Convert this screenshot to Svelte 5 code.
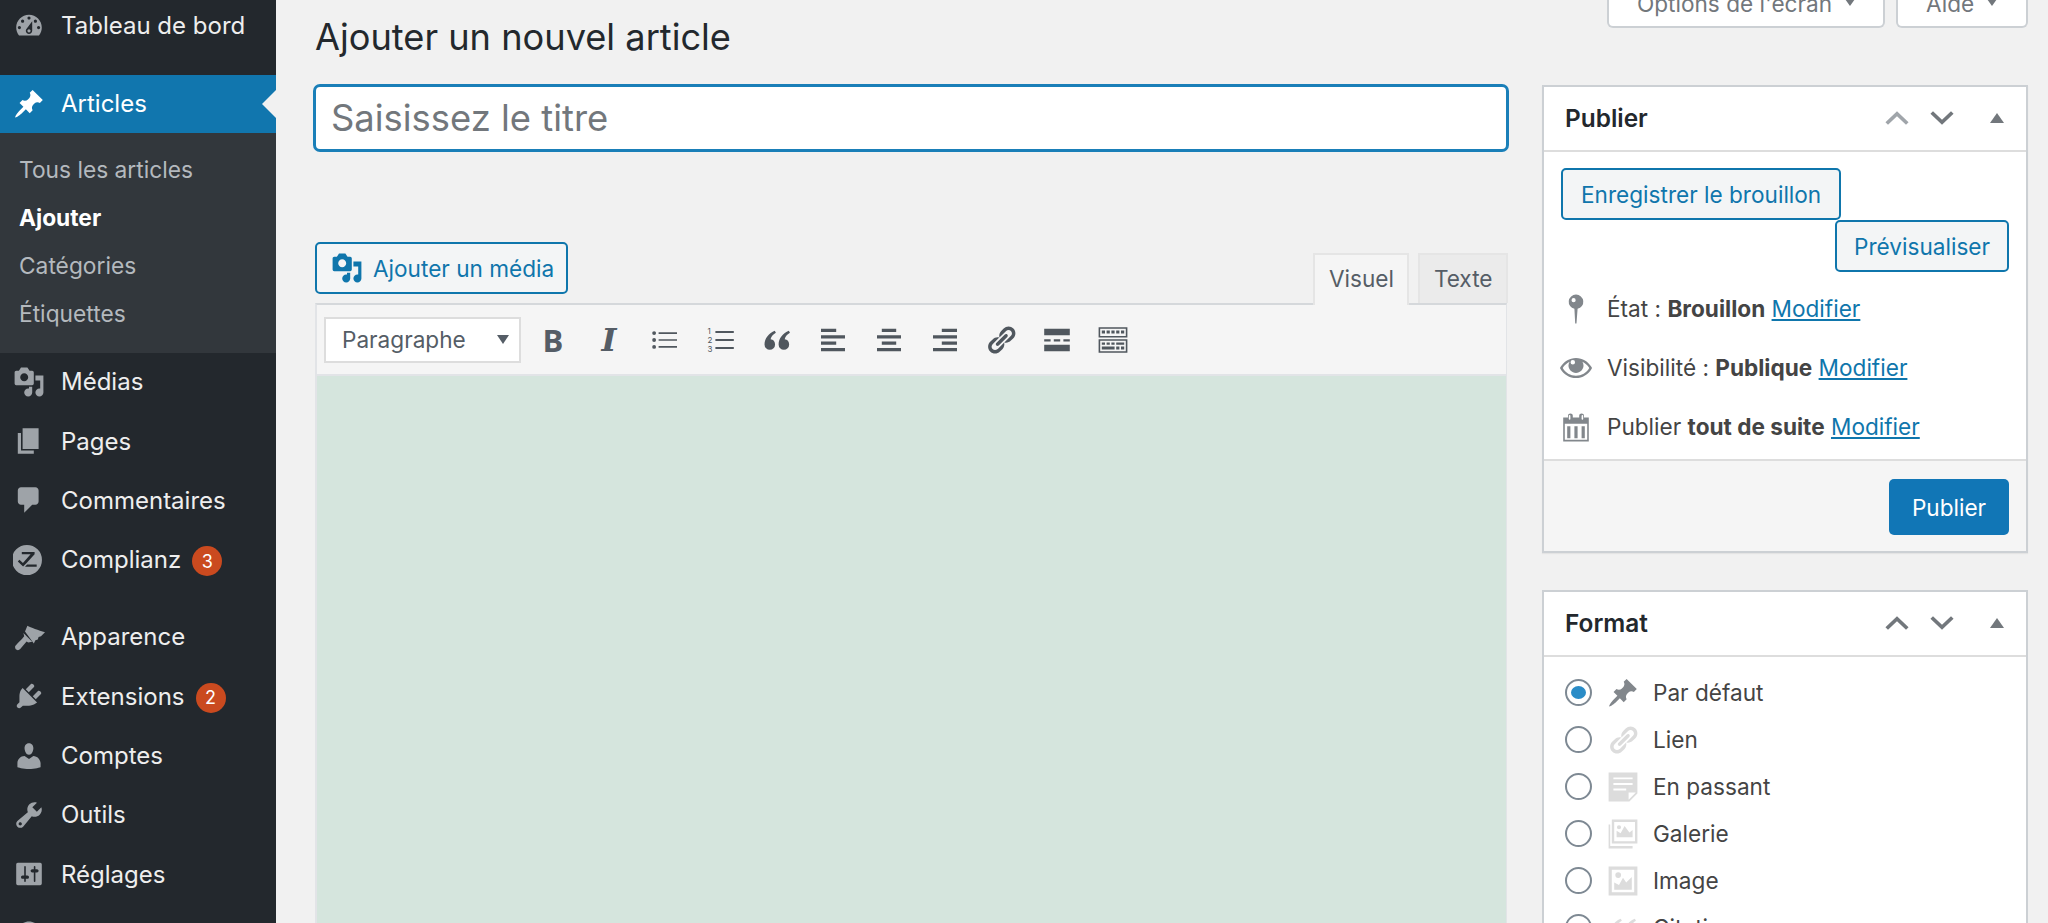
<script>
	const icons = {
		dashboard:
			'M3.76 16h12.48c1.1-1.37 1.76-3.11 1.76-5 0-4.42-3.58-8-8-8s-8 3.58-8 8c0 1.89.66 3.63 1.76 5zM10 4c.55 0 1 .45 1 1s-.45 1-1 1-1-.45-1-1 .45-1 1-1zM6 6c.55 0 1 .45 1 1s-.45 1-1 1-1-.45-1-1 .45-1 1-1zm8 0c.55 0 1 .45 1 1s-.45 1-1 1-1-.45-1-1 .45-1 1-1zm-5.37 5.55L12 7v6c0 1.1-.9 2-2 2s-2-.9-2-2c0-.57.24-1.08.63-1.45zM4 10c.55 0 1 .45 1 1s-.45 1-1 1-1-.45-1-1 .45-1 1-1zm12 0c.55 0 1 .45 1 1s-.45 1-1 1-1-.45-1-1 .45-1 1-1zm-5 3c0-.55-.45-1-1-1s-1 .45-1 1 .45 1 1 1 1-.45 1-1z',
		pin: 'M10.44 3.02l1.82-1.82 6.36 6.35-1.83 1.82c-1.05-.68-2.48-.57-3.41.36l-.75.75c-.92.93-1.04 2.35-.35 3.41l-1.83 1.82-2.41-2.41-2.8 2.79c-.42.42-3.38 2.71-3.8 2.29s1.86-3.39 2.28-3.81l2.79-2.79L4.1 9.36l1.83-1.82c1.05.69 2.48.57 3.4-.36l.75-.75c.93-.92 1.05-2.35.36-3.41z',
		media:
			'M13 11V4c0-.55-.45-1-1-1h-1.67L9 1H5L3.67 3H2c-.55 0-1 .45-1 1v7c0 .55.45 1 1 1h10c.55 0 1-.45 1-1zM7 4.5c1.38 0 2.5 1.12 2.5 2.5S8.38 9.5 7 9.5 4.5 8.38 4.5 7 5.62 4.5 7 4.5zM14 6h5v10.5c0 1.38-1.12 2.5-2.5 2.5S14 17.88 14 16.5s1.12-2.5 2.5-2.5c.17 0 .34.02.5.05V9h-3V6zm-4 8.05V13h2v3.5c0 1.38-1.12 2.5-2.5 2.5S7 17.88 7 16.5 8.12 14 9.5 14c.17 0 .34.02.5.05z',
		page: 'M6 15V2h10v13H6zm-1 1h8v2H3V5h2v11z',
		comments:
			'M5 2h9c1.1 0 2 .9 2 2v7c0 1.1-.9 2-2 2h-2l-5 5v-5H5c-1.1 0-2-.9-2-2V4c0-1.1.9-2 2-2z',
		complianz:
			'M8.700.600a9.400 9.400 0 1 0 0 18.800 9.400 9.400 0 0 0 0-18.800zM5.500 5h8v1.400L8.500 11.800 6.300 14l-3.300-3 1-1.100 2.200 2L11 6.400H5.500zM8.800 12.800h6v1.400H7.500z',
		brush:
			'M9 3C11 4 16 6 20 7L17.500 9.500 16 10 15.500 11.500 14 12 13 14 7.500 6.500zM6.500 7.500 12 13 9.500 13.500 8.500 12.800 4.500 17.500C3.500 18.800 1 18.300 1.300 16 1.500 15 6 11 7 9.500z',
		plugin:
			'M13.11 4.36L9.87 7.6 8 5.73l3.24-3.24c.35-.34 1.05-.2 1.56.32.52.51.66 1.21.31 1.55zm-8 1.77l.91-1.12 9.01 9.01-1.19.84c-.71.71-2.63 1.16-3.82 1.16H6.14L4.9 17.26c-.59.59-1.54.59-2.12 0-.59-.58-.59-1.53 0-2.12l1.24-1.24v-3.88c0-1.13.4-3.05 1.09-3.89zm7.26 3.97l3.24-3.24c.34-.35 1.04-.21 1.55.31.52.51.66 1.21.31 1.55l-3.24 3.25z',
		users:
			'M10 9.25c-2.27 0-2.73-3.44-2.73-3.44C7 4.02 7.82 2 9.97 2c2.16 0 2.98 2.02 2.71 3.81 0 0-.41 3.44-2.68 3.44zm0 2.57L12.72 10c2.39 0 4.52 2.33 4.52 4.53v2.49s-3.65 1.13-7.24 1.13c-3.65 0-7.24-1.13-7.24-1.13v-2.49c0-2.25 1.94-4.48 4.47-4.48z',
		tools:
			'M16.68 9.77c-1.34 1.34-3.3 1.67-4.95.99l-5.41 6.52c-.99.99-2.59.99-3.58 0s-.99-2.59 0-3.57l6.52-5.42c-.68-1.65-.35-3.61.99-4.95 1.28-1.28 3.12-1.62 4.72-1.06l-2.89 2.89 2.82 2.82 2.86-2.87c.53 1.58.18 3.41-1.08 4.65zM3.81 16.21c.4.39 1.04.39 1.43 0 .4-.4.4-1.04 0-1.43-.39-.4-1.03-.4-1.43 0-.39.39-.39 1.03 0 1.43z',
		settings:
			'M18 16V4c0-.55-.45-1-1-1H3c-.55 0-1 .45-1 1v12c0 .55.45 1 1 1h14c.55 0 1-.45 1-1zM8 11h1c.55 0 1 .45 1 1s-.45 1-1 1H8v1.5c0 .28-.22.5-.5.5s-.5-.22-.5-.5V13H6c-.55 0-1-.45-1-1s.45-1 1-1h1V5.5c0-.28.22-.5.5-.5s.5.22.5.5V11zm5-2h-1c-.55 0-1-.45-1-1s.45-1 1-1h1V5.500c0-.28.22-.5.5-.5s.5.22.5.5V7h1c.55 0 1 .45 1 1s-.45 1-1 1h-1v5.500c0 .28-.22.5-.5.5s-.5-.22-.5-.5V9z',
		collapse:
			'M10 2.16c4.33 0 7.84 3.51 7.84 7.84s-3.51 7.84-7.84 7.84S2.16 14.33 2.16 10 5.67 2.16 10 2.16zM11 14V6l-4 4z',
		link: 'M17.74 2.76c1.68 1.69 1.68 4.41 0 6.1l-1.53 1.52c-1.12 1.12-2.7 1.49-4.13 1.13l2.62-2.62.76-.77.76-.76c.84-.84.84-2.2 0-3.04-.84-.85-2.2-.85-3.04 0l-.77.76-3.38 3.38c-.37-1.43 0-3.01 1.12-4.13l1.52-1.53c1.69-1.68 4.42-1.68 6.1 0zM8.59 13.43l5.34-5.34c.42-.42.42-1.1 0-1.52-.44-.43-1.13-.39-1.53 0l-5.33 5.34c-.42.42-.42 1.1 0 1.52.43.43 1.09.39 1.52 0zm-.76 2.29l4.14-4.14c.38 1.43 0 3.02-1.12 4.14l-1.52 1.52c-1.68 1.68-4.41 1.68-6.1 0-1.68-1.68-1.68-4.42 0-6.1l1.53-1.52c1.12-1.13 2.71-1.5 4.14-1.13l-3.38 3.38-.76.76c-.84.84-.84 2.2 0 3.04.84.84 2.2.84 3.04 0z',
		quote:
			'M8.800 12.800a3.300 3.300 0 1 1-6.600 0C2.200 9 5 5.500 8.600 4.200L9.300 5.500C7.300 6.700 6.300 8 6 9.600 7.700 9.700 8.800 11.100 8.800 12.800zM17.600 12.800a3.300 3.300 0 1 1-6.600 0C11 9 13.800 5.500 17.400 4.200L18.100 5.500C16.100 6.700 15.100 8 14.800 9.600 16.500 9.700 17.600 11.100 17.600 12.800z',
		listUl:
			'M6 5.200h11.500v1H6zM6 9.500h11.500v1H6zM6 13.800h11.500v1H6zM4.400 5.700a1.200 1.200 0 1 1-2.400 0 1.200 1.200 0 0 1 2.400 0zM4.400 10a1.200 1.200 0 1 1-2.400 0 1.200 1.200 0 0 1 2.400 0zM4.400 14.300a1.200 1.200 0 1 1-2.400 0 1.200 1.200 0 0 1 2.400 0z',
		listOl: 'M6.500 4.400h11.500v1.200H6.500zM6.500 9.400h11.500v1.200H6.500zM6.500 14.400h11.500v1.200H6.500z',
		alignLeft: 'M2.500 3h9.500v2H2.500zM2.500 7h15v2h-15zM2.500 11h9.500v2H2.500zM2.500 15h15v2h-15z',
		alignCenter: 'M5.500 3h9v2h-9zM2.500 7h15v2h-15zM5.500 11h9v2h-9zM2.500 15h15v2h-15z',
		alignRight: 'M8 3h9.500v2H8zM2.500 7h15v2h-15zM8 11h9.500v2H8zM2.500 15h15v2h-15z',
		more: 'M2 3h16v4H2zM2 9.500h4v1.500H2zM8 9.500h4v1.500H8zM14 9.500h4v1.500h-4zM2 13h16v4H2z',
		kitchen:
			'M1 2h18v6.500H1zM2 3v4.500h16V3zM3 4h2v2H3zM6 4h2v2H6zM9 4h2v2H9zM12 4h2v2h-2zM15 4h2v2h-2zM1 9.500h18V18H1zM2 10.500V17h16v-6.500zM3 11.500h2v1.500H3zM6 11.500h2v1.500H6zM9 11.500h2v1.500H9zM12 11.500h5v1.500h-5zM3 14h8v2H3zM12 14h2v2h-2zM15 14h2v2h-2z',
		location:
			'M10 1a4.500 4.500 0 0 1 1 8.900L10.300 19H9.500L9 9.900A4.500 4.500 0 0 1 10 1zM8.500 3.200a1.300 1.300 0 1 0 0 2.600 1.300 1.300 0 0 0 0-2.600z',
		eye: 'M19.700 9.400C17.700 6 14.100 3.700 10 3.700S2.300 6 .3 9.400L0 10l.3.6c2 3.400 5.600 5.700 9.700 5.700s7.700-2.300 9.700-5.700l.3-.6-.3-.6zM10 14.800c-3.500 0-6.600-1.800-8.300-4.800 1-1.700 2.500-3 4.300-3.900-.4.700-.7 1.500-.7 2.400 0 2.500 2.100 4.600 4.700 4.600s4.700-2.100 4.700-4.600c0-.9-.3-1.700-.7-2.400 1.800.9 3.300 2.200 4.300 3.900-1.700 3-4.800 4.800-8.300 4.800zM8 5a1.400 1.400 0 1 1 0 2.800A1.400 1.400 0 0 1 8 5z',
		calendar:
			'M15 4h3v15H2V4h3V3c0-.41.15-.76.44-1.06.29-.29.65-.44 1.060-.44s.77.15 1.060.44c.29.3.44.65.44 1.060v1h4V3c0-.41.15-.76.44-1.060.29-.29.65-.44 1.060-.44s.77.15 1.060.44c.29.3.44.65.44 1.060v1zM6 5.500c.28 0 .5-.22.5-.5V3c0-.28-.22-.5-.5-.5s-.5.22-.5.5v2c0 .28.22.5.5.5zm8 0c.28 0 .5-.22.5-.5V3c0-.28-.22-.5-.5-.5s-.5.22-.5.5v2c0 .28.22.5.5.5zM17 18V8H3v10zM4.500 9.500h2V17h-2zM9 9.500h2V17H9zM13.500 9.500h2V17h-2z',
		aside:
			'M1 1h18v13l-5 5H1zM4 4v1.200h12V4zM4 7.500v1.200h12V7.500zM4 11v1.200h8V11zM13.500 18l4.500-4.500h-4.500z',
		gallery:
			'M3 1h16v15H3zM4.500 2.500v12h13v-12zM6 12V8l2.500 1.500L11 5l3 4 2-1.500V12zM7.500 4.500a1.300 1.300 0 1 0 0 2.600 1.300 1.300 0 0 0 0-2.600zM1 4h1v13.500h14v1.500H1z',
		image:
			'M1 1h18v18H1zM3 3v14h14V3zM4.500 15.500V11l3 1.500L10 8l2 3 3.500-3.500v8zM7 4.500a1.800 1.800 0 1 0 0 3.600 1.800 1.800 0 0 0 0-3.600z',
		up: 'M2.300 12.800 10 5.500 17.700 12.800 16 14.500 10 8.900 4 14.500z',
		down: 'M2.300 7.200 10 14.500 17.700 7.200 16 5.500 10 11.100 4 5.500z'
	};

	const menuTop = [{ label: 'Tableau de bord', icon: 'dashboard' }];
	const subMenu = ['Tous les articles', 'Ajouter', 'Catégories', 'Étiquettes'];
	const menuA = [
		{ label: 'Médias', icon: 'media' },
		{ label: 'Pages', icon: 'page' },
		{ label: 'Commentaires', icon: 'comments' },
		{ label: 'Complianz', icon: 'complianz', badge: 3 }
	];
	const menuB = [
		{ label: 'Apparence', icon: 'brush' },
		{ label: 'Extensions', icon: 'plugin', badge: 2 },
		{ label: 'Comptes', icon: 'users' },
		{ label: 'Outils', icon: 'tools' },
		{ label: 'Réglages', icon: 'settings' },
		{ label: 'Réduire le menu', icon: 'collapse' }
	];

	const toolbar = [
		'b', 'i', 'listUl', 'listOl', 'quote', 'alignLeft', 'alignCenter', 'alignRight', 'link', 'more', 'kitchen'
	];

	const formats = [
		{ label: 'Par défaut', icon: 'pin', checked: true },
		{ label: 'Lien', icon: 'link' },
		{ label: 'En passant', icon: 'aside' },
		{ label: 'Galerie', icon: 'gallery' },
		{ label: 'Image', icon: 'image' },
		{ label: 'Citation', icon: 'quote' }
	];
</script>

{#snippet icon(name, cls = '')}
	<svg class="icon {cls}" viewBox="0 0 20 20" aria-hidden="true"><path fill-rule="evenodd" d={icons[name]} /></svg>
{/snippet}

{#snippet menuItem(item)}
	<li class="item">
		{@render icon(item.icon, 'menu-icon')}
		<span>{item.label}</span>
		{#if item.badge}<span class="badge">{item.badge}</span>{/if}
	</li>
{/snippet}

{#snippet boxHead(title, dimmed = false)}
	<header class="box-head">
		<h2>{title}</h2>
		<span class="arrows">
			{@render icon('up', dimmed ? 'up-dim' : '')}
			{@render icon('down')}
			<i class="caret-up"></i>
		</span>
	</header>
{/snippet}

<div class="page">
	<nav class="sidebar">
		<ul class="menu top">
			{#each menuTop as item}{@render menuItem(item)}{/each}
		</ul>
		<div class="current">
			{@render icon('pin', 'menu-icon')}
			<span>Articles</span>
		</div>
		<ul class="sub">
			{#each subMenu as s, i}
				<li class:active={i === 1}>{s}</li>
			{/each}
		</ul>
		<ul class="menu">
			{#each menuA as item}{@render menuItem(item)}{/each}
		</ul>
		<ul class="menu second">
			{#each menuB as item}{@render menuItem(item)}{/each}
		</ul>
	</nav>

	<main class="content">
		<section class="left">
			<h1>Ajouter un nouvel article</h1>
			<input class="title" type="text" placeholder="Saisissez le titre" />
			<div class="editor-top">
				<button class="btn media-btn" type="button">
					{@render icon('media')}
					Ajouter un média
				</button>
				<div class="tabs">
					<span class="tab on">Visuel</span>
					<span class="tab">Texte</span>
				</div>
			</div>
			<div class="editor">
				<div class="toolbar">
					<div class="select">Paragraphe <i class="caret-down"></i></div>
					{#each toolbar as t}
						<span class="tool">
							{#if t === 'b'}
								<b class="tb">B</b>
							{:else if t === 'i'}
								<em class="ti">I</em>
							{:else if t === 'listOl'}
								<svg class="icon" viewBox="0 0 20 20" aria-hidden="true">
									<path d={icons.listOl} />
									<text class="nums" x="1.500" y="6.500">1</text>
									<text class="nums" x="1.500" y="12">2</text>
									<text class="nums" x="1.500" y="17.500">3</text>
								</svg>
							{:else}
								{@render icon(t)}
							{/if}
						</span>
					{/each}
				</div>
				<div class="edit-area"></div>
			</div>
		</section>

		<aside class="side">
			<div class="screen-meta">
				<button class="meta-btn options" type="button">Options de l'écran <i class="caret-down small"></i></button>
				<button class="meta-btn help" type="button">Aide <i class="caret-down small"></i></button>
			</div>

			<div class="box publish">
				{@render boxHead('Publier', true)}
				<div class="actions">
					<button class="btn" type="button">Enregistrer le brouillon</button>
					<button class="btn preview" type="button">Prévisualiser</button>
				</div>
				<ul class="misc">
					<li>{@render icon('location')}<span>État : <b>Brouillon</b> <a href="#etat">Modifier</a></span></li>
					<li>{@render icon('eye')}<span>Visibilité : <b>Publique</b> <a href="#vis">Modifier</a></span></li>
					<li>{@render icon('calendar')}<span>Publier <b>tout de suite</b> <a href="#date">Modifier</a></span></li>
				</ul>
				<div class="box-foot">
					<button class="primary" type="button">Publier</button>
				</div>
			</div>

			<div class="box format">
				{@render boxHead('Format')}
				<ul class="formats">
					{#each formats as f}
						<li>
							<span class="radio" class:checked={f.checked}></span>
							{@render icon(f.icon, f.checked ? 'fmt dark' : 'fmt')}
							<span>{f.label}</span>
						</li>
					{/each}
				</ul>
			</div>
		</aside>
	</main>
</div>

<style>
	:global(body) {
		margin: 0;
		background: #f1f1f1;
	}

	.page {
		display: flex;
		height: 923px;
		overflow: hidden;
		font-family: Inter, 'Noto Sans', sans-serif;
		font-size: 22.600px;
		color: #444;
	}

	ul {
		list-style: none;
		margin: 0;
		padding: 0;
	}

	.icon {
		width: 32px;
		height: 32px;
		fill: currentColor;
		flex: none;
		display: block;
	}

	/* sidebar */
	.sidebar {
		width: 276px;
		flex: none;
		background: #23282d;
		color: #eee;
		font-size: 24px;
	}

	.menu.top {
		margin-top: -4px;
		margin-bottom: 19.600px;
	}

	.item,
	.current {
		display: flex;
		align-items: center;
		height: 59.400px;
		padding-left: 13px;
		box-sizing: border-box;
	}

	.menu-icon {
		color: #9ea3a8;
		margin-right: 16px;
	}

	.current {
		position: relative;
		height: 58px;
		background: #1176ae;
		color: #fff;
	}

	.current .menu-icon {
		color: #fff;
	}

	.current::after {
		content: '';
		position: absolute;
		right: 0;
		top: 15px;
		border: 14px solid transparent;
		border-left: 0;
		border-right-color: #f1f1f1;
	}

	.sub {
		background: #32373c;
		height: 220px;
		padding-top: 13px;
		box-sizing: border-box;
		color: #b4b9be;
		font-size: 22.750px;
		margin-bottom: -1px;
	}

	.sub li {
		height: 48px;
		line-height: 48px;
		padding-left: 19px;
	}

	.sub .active {
		color: #fff;
		font-weight: 700;
	}

	.menu.second {
		margin-top: 17.500px;
	}

	.badge {
		width: 30px;
		height: 30px;
		border-radius: 50%;
		background: #ca4a1f;
		color: #fff;
		font-size: 18px;
		display: flex;
		align-items: center;
		justify-content: center;
		margin-left: 11px;
		margin-top: 3px;
	}

	/* main */
	.content {
		flex: 1;
		display: grid;
		grid-template-columns: 1196px 486px;
		column-gap: 33px;
		align-items: start;
		padding-left: 37px;
	}

	h1 {
		margin: 14px 0 0 2px;
		font-size: 36.200px;
		font-weight: 400;
		line-height: 46px;
		color: #23282d;
	}

	.title {
		display: block;
		width: 100%;
		height: 68px;
		margin-top: 24px;
		box-sizing: border-box;
		border: 3px solid #1a7fb8;
		border-radius: 7px;
		background: #fff;
		padding: 0 15px;
		font: inherit;
		font-size: 36.400px;
		outline: none;
	}

	.title::placeholder {
		color: #72777c;
		opacity: 1;
	}

	.editor-top {
		display: flex;
		justify-content: space-between;
		align-items: flex-end;
		height: 151px;
		padding-left: 2px;
		padding-right: 1px;
		box-sizing: border-box;
	}

	.btn {
		font: inherit;
		color: #0f76ac;
		background: #f3f5f6;
		border: 2px solid #0f76ac;
		border-radius: 5px;
		height: 52px;
		padding: 0 18px;
		white-space: nowrap;
		cursor: pointer;
		display: inline-flex;
		align-items: center;
	}

	.media-btn {
		gap: 10px;
		padding: 0 12px 0 14px;
		margin-bottom: 9px;
	}

	.tabs {
		display: flex;
		align-items: flex-start;
		gap: 9px;
		position: relative;
		z-index: 1;
	}

	.tab {
		height: 50px;
		line-height: 48px;
		padding: 0 13.500px;
		box-sizing: border-box;
		background: #ebebeb;
		color: #555d66;
		border: 2px solid #e5e5e5;
		border-bottom: 0;
	}

	.tab.on {
		background: #f5f5f5;
		height: 52px;
		margin-bottom: -2px;
	}

	.editor {
		margin-left: 2px;
		width: 1192px;
		box-sizing: border-box;
		border: 2px solid #e2e4e7;
		border-top-color: #d5d8db;
		border-bottom: 0;
		border-right-width: 1px;
	}

	.toolbar {
		display: flex;
		align-items: center;
		height: 71px;
		box-sizing: border-box;
		background: #f5f5f5;
		border-bottom: 2px solid #e2e4e7;
		padding: 0 0 0 7px;
	}

	.select {
		width: 197px;
		height: 46px;
		box-sizing: border-box;
		background: #fff;
		border: 2px solid #ddd;
		color: #555d66;
		display: flex;
		align-items: center;
		justify-content: space-between;
		padding: 0 10px 0 16px;
		margin-right: 4px;
	}

	.tool {
		width: 56px;
		display: flex;
		justify-content: center;
		align-items: center;
		color: #50575e;
	}

	.tb,
	.ti {
		display: block;
		line-height: 32px;
		color: #555d66;
	}

	.tb {
		font-size: 31px;
		font-family: 'Open Sans', sans-serif;
		font-weight: 700;
	}

	.ti {
		font-size: 32px;
		font-family: 'DejaVu Serif', serif;
		font-weight: 700;
		font-style: italic;
	}

	.nums {
		font-size: 5px;
		fill: #50575e;
		font-family: Inter, sans-serif;
	}

	.edit-area {
		height: 560px;
		background: #d5e5dd;
	}

	.caret-down {
		width: 0;
		height: 0;
		border: 6px solid transparent;
		border-top: 9px solid #555d66;
		border-bottom: 0;
		display: inline-block;
	}

	.caret-down.small {
		border-width: 5px;
		border-top-width: 7px;
		border-bottom: 0;
		border-top-color: #72777c;
		margin-left: 13px;
		margin-bottom: 10px;
	}

	/* right column */
	.screen-meta {
		display: flex;
		justify-content: flex-end;
		gap: 11px;
		height: 28px;
		align-items: flex-end;
		margin-bottom: 57px;
	}

	.meta-btn {
		font: inherit;
		color: #72777c;
		background: #fff;
		border: 2px solid #ccd0d4;
		border-top: 0;
		border-radius: 0 0 6px 6px;
		height: 52px;
		padding: 0 16px 10px 28px;
		flex: none;
		white-space: nowrap;
		display: flex;
		align-items: flex-end;
		line-height: 24px;
		box-sizing: border-box;
	}

	.meta-btn.options {
		width: 278px;
	}

	.meta-btn.help {
		width: 132px;
	}

	.box {
		background: #fff;
		border: 2px solid #ccd0d4;
		box-sizing: border-box;
	}

	.publish {
		height: 468px;
		display: flex;
		flex-direction: column;
		margin-bottom: 37px;
		box-shadow: 0 1px 1px rgba(0, 0, 0, 0.05);
	}

	.box-head {
		height: 65px;
		flex: none;
		display: flex;
		align-items: center;
		justify-content: space-between;
		box-sizing: border-box;
		border-bottom: 2px solid #ddd;
		padding: 0 22px 2px 21px;
	}

	h2 {
		margin: 0;
		font-size: 24.400px;
		font-weight: 600;
		color: #23282d;
	}

	.arrows {
		display: flex;
		align-items: center;
		color: #72777c;
	}

	.arrows .icon {
		width: 30px;
		height: 30px;
		margin-left: 15px;
	}

	.arrows .up-dim {
		color: #a0a5aa;
	}

	.caret-up {
		width: 0;
		height: 0;
		border: 7px solid transparent;
		border-top: 0;
		border-bottom: 10px solid #72777c;
		margin-left: 33px;
	}

	.actions {
		display: flex;
		flex-direction: column;
		align-items: flex-start;
		padding: 16px 17px 0 17px;
	}

	.actions .preview {
		align-self: flex-end;
		padding: 0 17px;
	}

	.misc {
		flex: 1;
		padding-top: 7px;
		color: #444;
	}

	.misc li {
		display: flex;
		align-items: center;
		height: 59px;
		padding-left: 16px;
		gap: 15px;
	}

	.misc .icon {
		color: #82878c;
	}

	.misc a {
		color: #0f76ac;
	}

	.box-foot {
		height: 92px;
		flex: none;
		box-sizing: border-box;
		background: #f5f5f5;
		border-top: 2px solid #ddd;
		display: flex;
		justify-content: flex-end;
		align-items: flex-start;
		padding: 18px 17px 0 0;
	}

	.primary {
		font: inherit;
		color: #fff;
		background: #1176b6;
		border: 0;
		border-radius: 5px;
		width: 120px;
		height: 56px;
	}

	.format {
		height: 500px;
	}

	.formats {
		padding-top: 12px;
	}

	.formats li {
		display: flex;
		align-items: center;
		height: 47px;
		padding-left: 21px;
	}

	.radio {
		width: 27px;
		height: 27px;
		box-sizing: border-box;
		border: 2px solid #7e8993;
		border-radius: 50%;
		background: #fff;
		margin-right: 15px;
		display: flex;
		align-items: center;
		justify-content: center;
		flex: none;
	}

	.radio.checked::before {
		content: '';
		width: 15px;
		height: 13px;
		border-radius: 50%;
		background: #2a8cc7;
	}

	.fmt {
		color: #dcdcdc;
		margin-right: 14px;
	}

	.fmt.dark {
		color: #82878c;
	}
</style>
